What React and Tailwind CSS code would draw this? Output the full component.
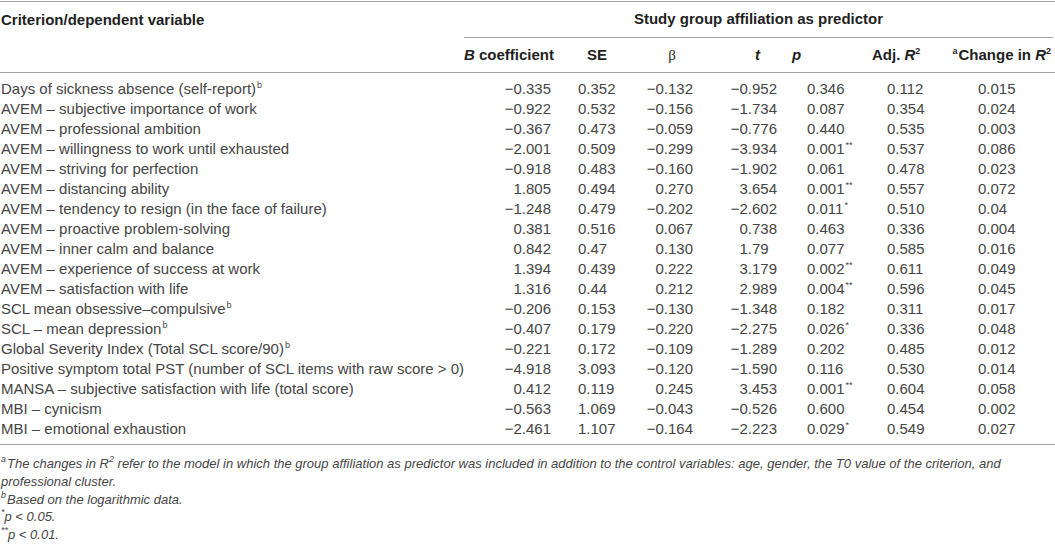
const ROWS = [
  ["Days of sickness absence (self-report)", "b", "−0.335", "0.352", "−0.132", "−0.952", "0.346", "0.112", "0.015"],
  ["AVEM – subjective importance of work", "", "−0.922", "0.532", "−0.156", "−1.734", "0.087", "0.354", "0.024"],
  ["AVEM – professional ambition", "", "−0.367", "0.473", "−0.059", "−0.776", "0.440", "0.535", "0.003"],
  ["AVEM – willingness to work until exhausted", "", "−2.001", "0.509", "−0.299", "−3.934", "0.001**", "0.537", "0.086"],
  ["AVEM – striving for perfection", "", "−0.918", "0.483", "−0.160", "−1.902", "0.061", "0.478", "0.023"],
  ["AVEM – distancing ability", "", "1.805", "0.494", "0.270", "3.654", "0.001**", "0.557", "0.072"],
  ["AVEM – tendency to resign (in the face of failure)", "", "−1.248", "0.479", "−0.202", "−2.602", "0.011*", "0.510", "0.04"],
  ["AVEM – proactive problem-solving", "", "0.381", "0.516", "0.067", "0.738", "0.463", "0.336", "0.004"],
  ["AVEM – inner calm and balance", "", "0.842", "0.47", "0.130", "1.79", "0.077", "0.585", "0.016"],
  ["AVEM – experience of success at work", "", "1.394", "0.439", "0.222", "3.179", "0.002**", "0.611", "0.049"],
  ["AVEM – satisfaction with life", "", "1.316", "0.44", "0.212", "2.989", "0.004**", "0.596", "0.045"],
  ["SCL mean obsessive–compulsive", "b", "−0.206", "0.153", "−0.130", "−1.348", "0.182", "0.311", "0.017"],
  ["SCL – mean depression", "b", "−0.407", "0.179", "−0.220", "−2.275", "0.026*", "0.336", "0.048"],
  ["Global Severity Index (Total SCL score/90)", "b", "−0.221", "0.172", "−0.109", "−1.289", "0.202", "0.485", "0.012"],
  ["Positive symptom total PST (number of SCL items with raw score > 0)", "", "−4.918", "3.093", "−0.120", "−1.590", "0.116", "0.530", "0.014"],
  ["MANSA – subjective satisfaction with life (total score)", "", "0.412", "0.119", "0.245", "3.453", "0.001**", "0.604", "0.058"],
  ["MBI – cynicism", "", "−0.563", "1.069", "−0.043", "−0.526", "0.600", "0.454", "0.002"],
  ["MBI – emotional exhaustion", "", "−2.461", "1.107", "−0.164", "−2.223", "0.029*", "0.549", "0.027"],
];

// value cell alignment per column (B, SE, β, t, p, Adj, Change)
const CELL = [
  "text-right pr-[11px]",
  "text-left pl-[16px]",
  "text-right pr-[19px]",
  "text-right pr-[3px]",
  "text-left pl-[27px]",
  "text-left pl-[37px]",
  "text-left pl-[58px]",
];

const GRID = "grid grid-cols-[464px_98px_70px_80px_68px_70px_70px_135px]";

function Sup({ children, className = "" }) {
  return (
    <sup className={`relative -top-[6px] align-baseline text-[9px] leading-none ${className}`}>
      {children}
    </sup>
  );
}

// pad short decimals in t column so the point lines up
function TValue({ v }) {
  const dec = v.split(".")[1] ?? "";
  const pad = "0".repeat(Math.max(0, 3 - dec.length));
  return (
    <>
      {v}
      {pad && <span className="invisible">{pad}</span>}
    </>
  );
}

function PValue({ v }) {
  const m = v.match(/^([\d.]+)(\**)$/);
  return (
    <>
      {m[1]}
      {m[2] && <Sup className="ml-[1px]">{m[2]}</Sup>}
    </>
  );
}

export default function App() {
  return (
    <div className="w-[1055px] h-[545px] overflow-hidden bg-white font-['Liberation_Sans',Arial,sans-serif] text-[15px] text-[#454545]">
      <div className="border-t border-[#a3a3a3] mt-[1px]">
        {/* header row 1 */}
        <div className={GRID}>
          <div className="h-[36px] flex items-center pl-[1px] font-bold text-[#1f1f1f] whitespace-nowrap">Criterion/dependent variable</div>
          <div className="col-span-7 h-[36px] flex items-center justify-center border-b border-[#a3a3a3] font-bold text-[#1f1f1f] mr-[2px]">
            Study group affiliation as predictor
          </div>
        </div>

        {/* header row 2 */}
        <div className={`${GRID} h-[35px] items-center font-bold text-[#1f1f1f] border-b border-[#a3a3a3] whitespace-nowrap`}>
          <div />
          <div className="text-right pr-[10px]"><i>B</i> coefficient</div>
          <div className="text-center">SE</div>
          <div className="text-center font-normal font-['Liberation_Serif',serif]">β</div>
          <div className="text-left pl-[43px]"><i>t</i></div>
          <div className="text-left pl-[12px]"><i>p</i></div>
          <div className="text-left pl-[22px]">Adj. <i>R</i><Sup>2</Sup></div>
          <div className="text-right pr-[4px]"><Sup className="mr-[1px]">a</Sup>Change in <i>R</i><Sup>2</Sup></div>
        </div>

        {/* body */}
        <div className="pt-[6px] pb-[5px] border-b border-[#a3a3a3]">
          {ROWS.map((r) => (
            <div key={r[0]} className={`${GRID} h-[20px] items-center leading-[20px]`}>
              <div className="pl-[1px] whitespace-nowrap">
                {r[0]}
                {r[1] && <Sup className="ml-[1px]">{r[1]}</Sup>}
              </div>
              {r.slice(2).map((v, i) => (
                <div key={i} className={`${CELL[i]} whitespace-nowrap`}>
                  {i === 3 ? <TValue v={v} /> : i === 4 ? <PValue v={v} /> : v}
                </div>
              ))}
            </div>
          ))}
        </div>
      </div>

      {/* footnotes */}
      <div className="mt-[10px] pl-[1px] italic text-[13px] leading-[17.8px] text-[#454545]">
        <p>
          <Sup className="mr-[1px]">a</Sup>The changes in <i>R</i><Sup>2</Sup> refer to the model in which the group affiliation as predictor was included in addition to the control variables: age, gender, the T0 value of the criterion, and
        </p>
        <p>professional cluster.</p>
        <p><Sup className="mr-[1px]">b</Sup>Based on the logarithmic data.</p>
        <p><Sup>*</Sup>p &lt; 0.05.</p>
        <p><Sup>**</Sup>p &lt; 0.01.</p>
      </div>
    </div>
  );
}
